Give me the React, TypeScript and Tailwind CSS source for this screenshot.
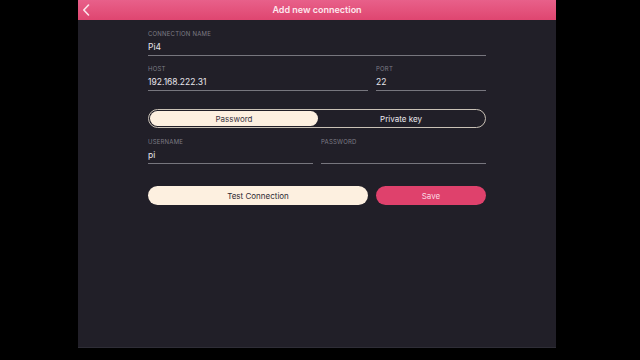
import React from "react";

function Field({ label, value, className = "" }: { label: string; value?: string; className?: string }) {
  return (
    <div className={"flex flex-col " + className}>
      <div className="text-[6px] leading-[8px] mt-[2px] tracking-[0.2px] text-[#7d7c85] uppercase">{label}</div>
      <div className="h-[18px] flex items-center text-[8.5px] text-[#e8e6ec] border-b border-[#77767e] pt-[2px]">{value}</div>
    </div>
  );
}

export default function App() {
  return (
    <div className="w-[640px] h-[360px] bg-black flex pl-[78px]" style={{ fontFamily: "Inter, 'Noto Sans', sans-serif" }}>
      <div className="w-[478px] h-[348px] bg-[#211f28] flex flex-col border-b border-[#2e2d36]">
        <div className="relative h-[20px] bg-gradient-to-b from-[#e8608a] to-[#df4570] flex items-center justify-center">
          <svg className="absolute left-[4px] top-[4px]" width="8" height="12" viewBox="0 0 8 12">
            <path d="M6.5 1 L1.8 6 L6.5 11" fill="none" stroke="#fbe3ea" strokeWidth="1.6" strokeLinecap="round" strokeLinejoin="round" />
          </svg>
          <span className="text-[9px] font-semibold text-[#fde8ee]">Add new connection</span>
        </div>
        <div className="mx-[70px] flex flex-col pt-[8px]">
          <Field label="Connection Name" value="Pi4" />
          <div className="flex gap-[8px] mt-[7px]">
            <Field label="Host" value="192.168.222.31" className="w-[220px]" />
            <Field label="Port" value="22" className="flex-1" />
          </div>
          <div className="mt-[18px] h-[19px] rounded-full border border-[#c9c1b6] flex p-[1px]">
            <div className="w-[168px] rounded-full bg-[#fdf0e0] flex items-center justify-center text-[8px] text-[#3a3540]">Password</div>
            <div className="flex-1 flex items-center justify-center text-[8px] text-[#ece9ee]">Private key</div>
          </div>
          <div className="flex gap-[8px] mt-[8px]">
            <Field label="Username" value="pi" className="w-[165px]" />
            <Field label="Password" value="" className="flex-1" />
          </div>
          <div className="flex gap-[8px] mt-[22px]">
            <div className="w-[220px] h-[19px] rounded-full bg-[#fdf0e0] flex items-center justify-center text-[8px] text-[#2e2a33]">Test Connection</div>
            <div className="flex-1 h-[19px] rounded-full bg-[#df416c] flex items-center justify-center text-[8px] text-[#fbd9e2]">Save</div>
          </div>
        </div>
      </div>
    </div>
  );
}
